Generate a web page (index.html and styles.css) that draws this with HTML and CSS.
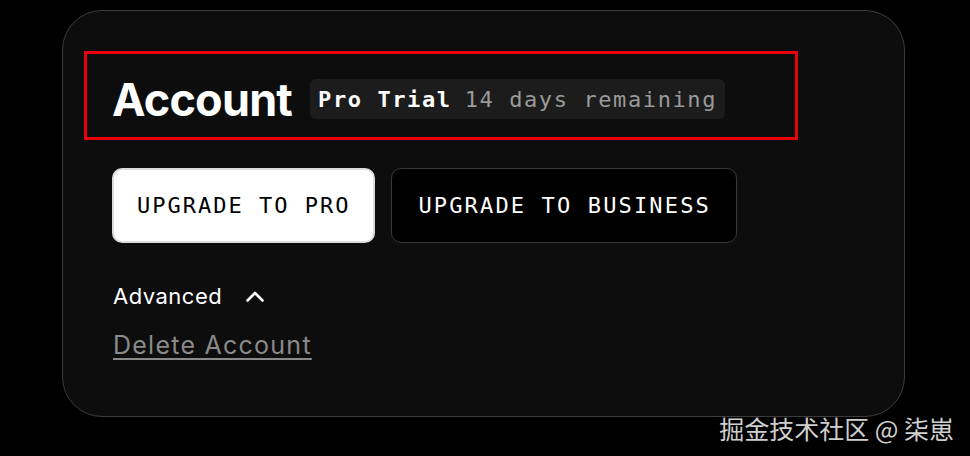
FILE: index.html
```html
<!DOCTYPE html>
<html>
<head>
<meta charset="utf-8">
<link rel="stylesheet" href="styles.css">
</head>
<body>
<div class="card">
  <div class="highlight">
    <h1 class="title">Account</h1>
    <div class="badge"><span class="plan">Pro Trial</span><span class="remain">14 days remaining</span></div>
  </div>
  <div class="actions">
    <button class="btn btn-light">UPGRADE TO PRO</button>
    <button class="btn btn-dark">UPGRADE TO BUSINESS</button>
  </div>
  <div class="advanced">
    <span>Advanced</span>
    <svg class="chev" width="18" height="11" viewBox="0 0 18 11"><path d="M1.5 9.5 L9 2 L16.5 9.5" fill="none" stroke="#fff" stroke-width="2.6" stroke-linecap="round" stroke-linejoin="round"/></svg>
  </div>
  <a class="delete" href="#">Delete Account</a>
</div>
<div class="watermark">掘金技术社区 @ 柒崽</div>
</body>
</html>
```

FILE: styles.css
```css
html, body {
  margin: 0;
  padding: 0;
  background: #000;
  width: 970px;
  height: 456px;
  overflow: hidden;
}
body {
  position: relative;
  font-family: Inter, "Liberation Sans", sans-serif;
  color: #fff;
}
.card {
  box-sizing: border-box;
  margin: 10px 0 0 62px;
  width: 843px;
  height: 407px;
  border: 1.5px solid #3c3c3c;
  border-radius: 40px;
  background: #0d0d0d;
  padding: 40px 0 0 21px;
}
.highlight {
  box-sizing: border-box;
  width: 714px;
  height: 89px;
  border: 3px solid #e8000b;
  display: flex;
  align-items: center;
  padding: 7px 0 0 25px;
  gap: 18px;
}
.title {
  margin: 0;
  font-size: 45px;
  font-weight: 700;
  letter-spacing: -0.8px;
  line-height: 1;
}
.badge {
  height: 40px;
  background: #1c1c1c;
  border-radius: 6px;
  display: flex;
  align-items: center;
  padding: 0 8px;
  gap: 13px;
  font-family: "DejaVu Sans Mono", "Liberation Mono", monospace;
  font-size: 22px;
  letter-spacing: 1.6px;
}
.plan {
  font-weight: 700;
  color: #fff;
}
.remain {
  color: #9a9a9a;
}
.actions {
  display: flex;
  gap: 16px;
  margin: 28px 0 0 28px;
}
.btn {
  height: 75px;
  box-sizing: border-box;
  border-radius: 10px;
  padding: 0 23px;
  font-family: "DejaVu Sans Mono", "Liberation Mono", monospace;
  font-size: 22px;
  letter-spacing: 2px;
}
.btn-light {
  background: #fff;
  color: #000;
  border: 2px solid #dcdcdc;
}
.btn-dark {
  background: #000;
  color: #fff;
  border: 1.5px solid #3a3a3a;
  padding: 0 25px 0 26px;
  letter-spacing: 2.15px;
}
.advanced {
  display: flex;
  align-items: center;
  gap: 24px;
  margin: 39px 0 0 29px;
  font-size: 22px;
  letter-spacing: 0.5px;
  line-height: 28px;
}
.chev {
  display: block;
}
.delete {
  display: inline-block;
  margin: 20px 0 0 29px;
  font-size: 25px;
  letter-spacing: 1.25px;
  color: #8a8a8a;
  text-decoration: underline;
  text-underline-offset: 4px;
  text-decoration-thickness: 2px;
}
.watermark {
  position: absolute;
  right: 16px;
  bottom: 12px;
  font-family: "Noto Sans CJK SC", sans-serif;
  font-size: 25px;
  line-height: 32px;
  color: #cfcfcf;
}
```
